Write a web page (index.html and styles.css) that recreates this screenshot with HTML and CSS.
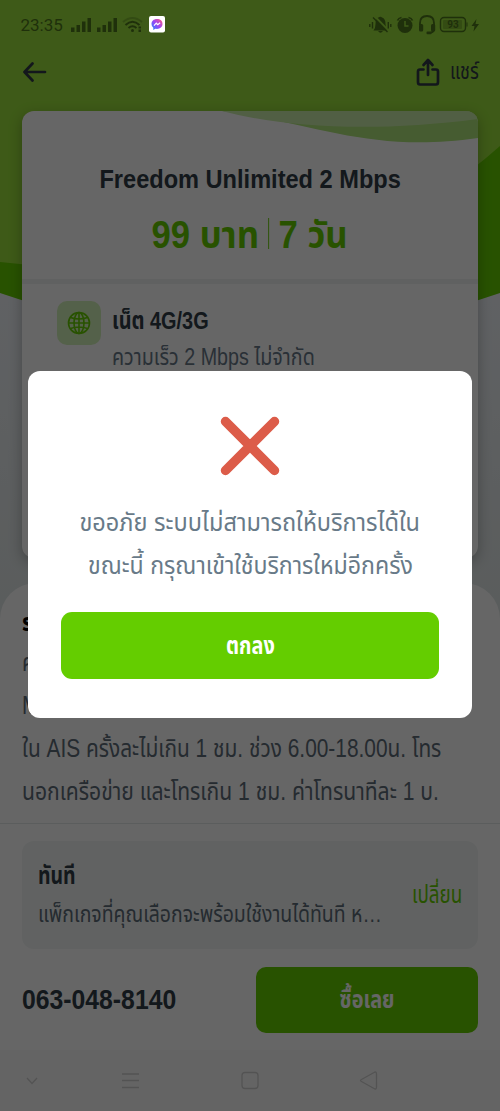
FILE: index.html
```html
<!DOCTYPE html>
<html lang="th">
<head>
<meta charset="utf-8">
<title>Freedom Unlimited 2 Mbps</title>
<link rel="stylesheet" href="styles.css">
</head>
<body>
<div class="screen">
  <div class="app">
    <svg class="backdrop" width="500" height="310" viewBox="0 0 500 310">
      <path d="M0 0H500V293Q250 380 0 293Z" fill="#64cd00"/>
      <path d="M0 0H500V146Q440 200 350 240Q200 285 0 262Z" fill="#9be13c"/>
    </svg>
    <header class="topbar">
      <svg width="24" height="22" viewBox="0 0 24 22" class="line"><path d="M22 11H2M9.500 2.500L1.500 11L9.500 19.500"/></svg>
      <div class="share">
        <svg width="24" height="28" viewBox="0 0 24 28" class="line"><path d="M7.500 11.500H4Q2 11.500 2 13.500V24Q2 26.500 4 26.500H20Q22 26.500 22 24V13.500Q22 11.500 20 11.500H16.500M12 17V3M7.500 7L12 2L16.500 7"/></svg>
        <span class="t share-label">แชร์</span>
      </div>
    </header>
    <section class="card">
      <svg class="wave" width="456" height="34" viewBox="0 0 456 34">
        <path d="M200 0C300 14 350 42 456 27V0Z" fill="#aee57a"/>
        <path d="M200 0C260 16 350 22 456 8V0Z" fill="#cbeeaa"/>
      </svg>
      <div class="card-head">
        <h1 class="t name">Freedom Unlimited 2 Mbps</h1>
        <div class="price"><span class="t amount">99 บาท</span><i class="bar"></i><span class="t days">7 วัน</span></div>
      </div>
      <div class="feature">
        <div class="badge">
          <svg width="24" height="24" viewBox="0 0 24 24" fill="none" stroke="#64cd00" stroke-width="1.600"><circle cx="12" cy="12" r="10.500"/><ellipse cx="12" cy="12" rx="5" ry="10.500"/><path d="M1.500 12H22.500M3.500 6.500Q12 9.500 20.500 6.500M3.500 17.500Q12 14.500 20.500 17.500M12 1.500V22.500"/></svg>
        </div>
        <div class="feature-text">
          <b class="t net">เน็ต 4G/3G</b>
          <span class="t speed">ความเร็ว 2 Mbps ไม่จำกัด</span>
        </div>
      </div>
    </section>
    <section class="sheet">
      <b class="t row head">ร</b>
      <span class="t row">ค</span>
      <span class="t row">M</span>
      <span class="t row r1">ใน AIS ครั้งละไม่เกิน 1 ชม. ช่วง 6.00-18.00น. โทร</span>
      <span class="t row r2">นอกเครือข่าย และโทรเกิน 1 ชม. ค่าโทรนาทีละ 1 บ.</span>
    </section>
    <section class="checkout">
      <div class="timing">
        <div class="timing-text">
          <b class="t now">ทันที</b>
          <span class="t note">แพ็กเกจที่คุณเลือกจะพร้อมใช้งานได้ทันที ห…</span>
        </div>
        <span class="t change">เปลี่ยน</span>
      </div>
      <div class="buy-row">
        <b class="t phone">063-048-8140</b>
        <div class="buy"><b class="t buy-label">ซื้อเลย</b></div>
      </div>
    </section>
    <nav class="nav">
      <svg width="500" height="61" viewBox="0 0 500 61" fill="none" stroke="#d0d0d0" stroke-width="1.300"><path d="M27 28L32 33.500L37 28M122 24H139M122 30.500H139M122 37.500H139"/><rect x="242" y="22.500" width="16" height="16" rx="3"/><path d="M374 22.500Q376.500 21 376.500 24V37Q376.500 40 374 38.500L361.500 31.500Q359.500 30.500 361.500 29.500Z"/></svg>
    </nav>
  </div>
  <div class="overlay">
    <div class="dialog">
      <svg width="60" height="60" viewBox="0 0 60 60"><path d="M5.500 5.500L54.500 54.500M54.500 5.500L5.500 54.500" stroke="#dc5c49" stroke-width="9.500" stroke-linecap="round"/></svg>
      <div class="message"><span class="t m1">ขออภัย ระบบไม่สามารถให้บริการได้ใน</span><span class="t m2">ขณะนี้ กรุณาเข้าใช้บริการใหม่อีกครั้ง</span></div>
      <div class="ok"><b class="t ok-label">ตกลง</b></div>
    </div>
  </div>
  <div class="status">
    <span class="clock">23:35</span>
    <svg class="signals" width="96" height="20" viewBox="0 0 96 20" fill="#1f300b">
      <path d="M0 12.500h3.500v4.500h-3.500zM5.500 10h3.500v7h-3.500zM11 6.500h3.500v10.500h-3.500zM16.500 3h3.500v14h-3.500zM26 12.500h3.500v4.500h-3.500zM31.500 10h3.500v7h-3.500zM37 6.500h3.500v10.500h-3.500zM42.500 3h3.500v14h-3.500z"/>
      <g fill="none" stroke="#1f300b" stroke-width="1.900"><path d="M52 7Q61.500 -1 71 7" opacity=".35"/><path d="M54.500 10Q61.500 3.500 68.500 10M57.500 13Q61.500 9.500 65.500 13"/></g>
      <circle cx="61.500" cy="15.500" r="1.500"/><path d="M67.500 11.500h2.500v2h-2.500zM67.500 14.500h2.500v2.500h-2.500z"/>
      <defs><linearGradient id="chat" x1="0" y1="1" x2="1" y2="0"><stop offset="0" stop-color="#168dff"/><stop offset=".5" stop-color="#9b45f5"/><stop offset="1" stop-color="#ff5b78"/></linearGradient></defs>
      <rect x="78" y="1" width="16" height="16.500" rx="2" fill="#fff"/>
      <path d="M86 4C82.500 4 80.500 6.300 80.500 9Q80.500 11.500 82.300 12.800V15L84.300 13.800C88.500 14.600 91.500 12.200 91.500 9S89.300 4 86 4Z" fill="url(#chat)"/>
      <path d="M83 10.600L85.300 8.200L86.800 9.600L89.100 7.700" fill="none" stroke="#fff" stroke-width="1.200"/>
    </svg>
    <svg class="right" width="112" height="22" viewBox="368 14 112 22" fill="#1f300b">
      <path d="M373.500 30.500Q375.500 28.500 375.500 24Q375.500 18 378.500 17.500Q380.500 15.800 382 17.500Q385.500 18.500 385.500 24Q385.500 28.500 387.500 30.500ZM378 31h5q-2.500 3.500-5 0z"/>
      <path d="M374.500 16L389 31" stroke="#3e5a18" stroke-width="1.800"/>
      <path d="M373 17.500L387.500 32M369.800 24v3M372.500 22v6.500M388.300 22v6.500M390.800 24v3" fill="none" stroke="#1f300b" stroke-width="1.400"/>
      <circle cx="405" cy="25.500" r="7.500"/><path d="M405 21v5h3.500" fill="none" stroke="#3e5a18" stroke-width="1.500"/><path d="M397.500 20.500Q398.500 18 401.500 17.500M412.500 20.500Q411.500 18 408.500 17.500" fill="none" stroke="#1f300b" stroke-width="1.700"/>
      <path d="M420 25V23Q420 16 427 16T434 23V29Q434 33 428 33" fill="none" stroke="#1f300b" stroke-width="1.800"/><rect x="419" y="24" width="4.200" height="7.500" rx="1.500"/><rect x="431" y="24" width="4.200" height="7.500" rx="1.500"/><rect x="426.500" y="31.500" width="5" height="2.700" rx="1"/>
      <rect x="440.500" y="17.500" width="25" height="14" rx="3.500" fill="none" stroke="#1f300b" stroke-width="1.400"/><rect x="443" y="20" width="19" height="9" rx="1" opacity=".3"/><path d="M466.500 22.500h1v4h-1z"/>
      <text x="453" y="28.300" text-anchor="middle" class="pct">93</text>
      <path d="M476.500 19L471.500 26H474.500L473.500 31.500L479 24H475.500Z"/>
    </svg>
  </div>
</div>
</body>
</html>
```
FILE: styles.css
```css
* { box-sizing: border-box; }
body { margin: 0; font-family: "Liberation Sans", "Noto Sans Thai", "Noto Sans", sans-serif; }
h1 { margin: 0; }
svg { display: block; flex: none; }
.screen { position: relative; width: 500px; height: 1111px; overflow: hidden; }
.app { height: 1111px; display: flex; flex-direction: column; background: linear-gradient(#eff3f8 300px, #e2e8e8 600px); position: relative; }
.backdrop { position: absolute; left: 0; top: 0; }
.t { display: inline-block; white-space: nowrap; line-height: 40px; transform-origin: left center; }
.line { fill: none; stroke: #303a46; stroke-width: 2.700; stroke-linecap: round; stroke-linejoin: round; }
.topbar { position: relative; margin-top: 46px; height: 65px; padding: 0 22px 13px 23px; display: flex; justify-content: space-between; align-items: center; }
.share { display: flex; gap: 10px; align-items: center; width: 62px; }
.share-label { font-size: 22px; color: #303a46; transform: scale(.82, 1.05); }
.card { position: relative; flex: none; height: 447px; margin: 0 22px; background: #fff; border-radius: 12px; overflow: hidden; box-shadow: 0 4px 14px rgba(0,0,0,.28); }
.wave { position: absolute; top: 0; left: 0; }
.card-head { position: relative; height: 173px; border-bottom: 5px solid #eff2f2; padding-top: 48px; display: flex; flex-direction: column; align-items: center; }
.name { font-size: 26px; color: #303c46; transform: scaleX(.907); transform-origin: center; }
.price { display: flex; margin-top: 16px; align-items: center; justify-content: center; color: #64cd00; font-weight: bold; font-size: 38px; gap: 10px; transform: scaleX(.912); }
.bar { width: 1.500px; height: 31px; margin-top: -4px; background: #64cd00; }
.feature { display: flex; gap: 11px; padding: 17px 35px; }
.badge { width: 44px; height: 44px; border-radius: 10px; background: #d3f2b8; display: grid; place-items: center; flex: none; }
.feature-text { display: flex; flex-direction: column; align-items: flex-start; }
.net { font-size: 23px; color: #303c46; transform: scale(.865, 1.04); }
.speed { font-size: 22px; color: #687888; margin-top: -3px; transform: scale(.895, 1.05); }
.sheet { flex: none; height: 241px; margin-top: 25px; padding: 22px 22px 0; background: #fff; border-radius: 36px 36px 0 0; border-bottom: 1px solid #e4e8e8; position: relative; display: flex; flex-direction: column; align-items: flex-start; }
.row { font-size: 24px; line-height: 43px; color: #5c6b78; transform: scale(.87, 1.04); }
.r2 { transform: scale(.88, 1.04); }
.head { color: #000; line-height: 36px; }
.checkout { height: 226px; background: #fff; padding: 17px 22px; flex: none; }
.timing { height: 108px; border-radius: 12px; background: #f2f6f5; padding: 16px; display: flex; align-items: center; justify-content: space-between; }
.timing-text { display: flex; flex-direction: column; align-items: flex-start; width: 345px; }
.now { font-size: 24px; line-height: 38px; margin-top: 2px; color: #303c46; transform: scaleX(.81); }
.note { font-size: 22px; color: #5c6b78; transform: scale(.885, 1.05); }
.change { font-size: 23px; color: #64cd00; transform: scale(.82, 1.05); transform-origin: right center; }
.buy-row { display: flex; margin-top: 18px; align-items: center; justify-content: space-between; height: 66px; }
.phone { font-size: 27px; color: #303c46; transform: scaleX(.917); }
.buy { width: 222px; height: 66px; background: #64cd00; border-radius: 10px; display: grid; place-items: center; }
.buy-label { font-size: 24px; color: #fff; transform: scaleX(.83); transform-origin: center; }
.nav { height: 61px; background: #fafafa; flex: none; }
.overlay { position: absolute; inset: 0; background: rgba(0,0,0,.6); padding: 371px 28px 0; }
.dialog { width: 444px; height: 347px; background: #fff; border-radius: 12px; padding: 45px 33px 0; display: flex; flex-direction: column; align-items: center; }
.message { margin-top: 25px; display: flex; flex-direction: column; align-items: center; color: #687a88; font-size: 24px; }
.message .t { line-height: 43px; transform-origin: center; }
.m1 { transform: scale(.98, 1.05); }
.m2 { transform: scale(.964, 1.05); }
.ok { margin-top: 25px; height: 67px; width: 378px; background: #64cd00; border-radius: 11px; display: grid; place-items: center; }
.ok-label { color: #fff; font-size: 24px; transform: scaleX(.83); transform-origin: center; }
.status { position: absolute; top: 0; left: 0; width: 500px; height: 50px; padding: 0 20px 0 20.500px; display: flex; align-items: center; color: #1f300b; }
.clock { font: 17px/20px Roboto, sans-serif; width: 50px; }
.right { margin-left: auto; }
.pct { font: bold 10px Roboto, sans-serif; }
```
